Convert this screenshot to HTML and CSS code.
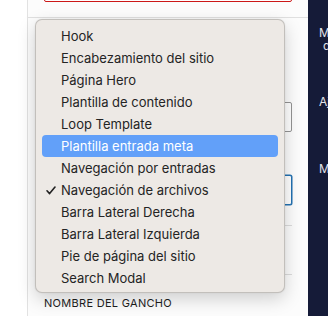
FILE: index.html
```html
<!DOCTYPE html>
<html lang="es">
<head>
    <meta charset="UTF-8">
    <meta name="viewport" content="width=device-width, initial-scale=1.0">
    <title>Hook</title>
    <link rel="stylesheet" href="styles.css">
</head>
<body>
    <div class="layout">
        <div class="gutter"></div>

        <div class="main">
            <!-- underlying form, mostly covered by the select menu -->
            <div class="field-top">
                <div class="input input-error"></div>
            </div>
            <div class="section">
                <div class="row row-label"><span class="label-tail">.</span></div>
                <div class="row row-label2"><span class="label-tail">.</span></div>
                <div class="input input-plain"></div>
                <div class="input input-focus"></div>
                <div class="box"></div>
                <div class="caption">NOMBRE DEL GANCHO</div>
            </div>

            <!-- native select popup -->
            <ul class="menu">
                <li class="menu-item">Hook</li>
                <li class="menu-item">Encabezamiento del sitio</li>
                <li class="menu-item">Página Hero</li>
                <li class="menu-item">Plantilla de contenido</li>
                <li class="menu-item">Loop Template</li>
                <li class="menu-item is-active">Plantilla entrada meta</li>
                <li class="menu-item">Navegación por entradas</li>
                <li class="menu-item is-checked">
                    <svg class="check" width="10" height="9" viewBox="0 0 10 9">
                        <path d="M1 4.8 L3.6 7.6 L9 1" fill="none" stroke="#222" stroke-width="1.6" stroke-linecap="round" stroke-linejoin="round"/>
                    </svg>
                    Navegación de archivos
                </li>
                <li class="menu-item">Barra Lateral Derecha</li>
                <li class="menu-item">Barra Lateral Izquierda</li>
                <li class="menu-item">Pie de página del sitio</li>
                <li class="menu-item">Search Modal</li>
            </ul>
        </div>

        <aside class="sidebar">
            <div class="sidebar-text sidebar-title">Me</div>
            <div class="sidebar-text sidebar-sub">de</div>
            <div class="sidebar-text sidebar-a">Aj</div>
            <div class="sidebar-text sidebar-m">Mo</div>
        </aside>
    </div>
</body>
</html>
```

FILE: styles.css
```css
* {
    box-sizing: border-box;
}

html, body {
    margin: 0;
    padding: 0;
}

body {
    font-family: Inter, "Noto Sans", sans-serif;
    background: #fff;
    color: #1e1e1e;
    width: 328px;
    height: 316px;
    overflow: hidden;
}

.layout {
    display: flex;
    width: 328px;
    height: 316px;
}

.gutter {
    flex: 0 0 28px;
    border-right: 1px solid #e2e2e2;
    background: #fff;
}

.main {
    position: relative;
    flex: 0 0 280px;
    background: #fcfcfc;
}

.field-top {
    height: 18px;
    padding: 0 16px;
    border-bottom: 1px solid #e0e0e0;
    overflow: hidden;
}

.input {
    border-radius: 2px;
}

.input-error {
    margin-top: -28px;
    height: 30px;
    border: 1px solid #cc1818;
    background: #fff;
}

.section {
    padding: 0 16px;
}

.row {
    height: 20px;
    text-align: right;
    font-size: 12px;
    line-height: 20px;
}

.row-label {
    margin-top: 16px;
}

.row-label2 {
    margin-top: 25px;
}

.label-tail {
    margin-right: 7px;
    font-weight: 700;
}

.input-plain {
    margin-top: 3px;
    height: 30px;
    border: 1px solid #949494;
    background: #fff;
}

.input-focus {
    margin-top: 43px;
    height: 30px;
    border: 1px solid #2271b1;
    box-shadow: 0 0 0 0.5px #2271b1;
    background: #fff;
}

.box {
    margin-top: 20px;
    height: 50px;
    border-top: 1px solid #dcdcdc;
    border-bottom: 1px solid #dcdcdc;
}

.caption {
    margin-top: 21px;
    font-size: 11px;
    letter-spacing: 0.3px;
    font-weight: 400;
    color: #1e1e1e;
}

.menu {
    position: absolute;
    left: 7px;
    top: 19px;
    width: 250px;
    height: 274px;
    margin: 0;
    padding: 5px 6px;
    list-style: none;
    background: #ede9e5;
    border: 0.5px solid rgba(0, 0, 0, 0.18);
    border-radius: 7px;
    box-shadow: 0 6px 18px rgba(0, 0, 0, 0.18), 0 0 2px rgba(0, 0, 0, 0.08);
}

.menu-item {
    position: relative;
    height: 22px;
    padding-left: 19px;
    font-size: 13px;
    line-height: 22px;
    color: #242424;
    border-radius: 4px;
    white-space: nowrap;
}

.menu-item.is-active {
    background: #62a0f9;
    color: #fff;
}

.check {
    position: absolute;
    left: 4px;
    top: 7px;
}

.sidebar {
    flex: 0 0 20px;
    background-color: #151b38;
    overflow: hidden;
}

.sidebar-text {
    height: 13px;
    font-size: 12px;
    line-height: 13px;
    color: #e4e5ea;
    white-space: nowrap;
    padding-left: 11px;
}

.sidebar-title {
    margin-top: 26px;
}

.sidebar-sub {
    padding-left: 15px;
}

.sidebar-a {
    margin-top: 43px;
}

.sidebar-m {
    margin-top: 54px;
}
```
